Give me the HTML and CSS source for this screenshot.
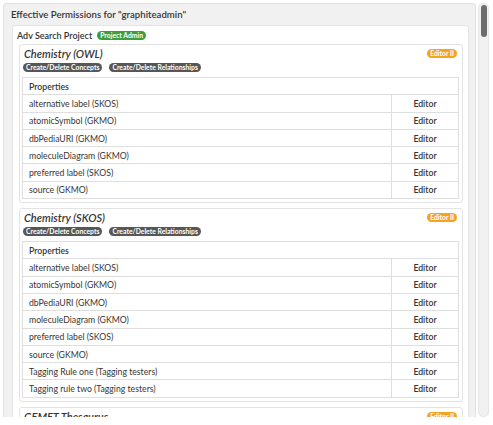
FILE: index.html
```html
<!DOCTYPE html>
<html>
<head>
<meta charset="utf-8">
<link rel="stylesheet" href="styles.css">
</head>
<body>
<div class="frame">
  <div class="viewport">
    <div class="panel">
      <div class="panel-title">Effective Permissions for "graphiteadmin"</div>
      <div class="project">
        <div class="project-title">Adv Search Project <span class="badge badge-green">Project Admin</span></div>
        <div class="cards">
          <div class="card">
            <div class="card-head">
              <span class="card-title">Chemistry (OWL)</span>
              <span class="badge badge-orange">Editor II</span>
            </div>
            <div class="card-badges">
              <span class="badge badge-dark">Create/Delete Concepts</span>
              <span class="badge badge-dark">Create/Delete Relationships</span>
            </div>
            <table class="perm-table">
              <tr><th colspan="2">Properties</th></tr>
              <tr><td>alternative label (SKOS)</td><td class="role">Editor</td></tr>
              <tr><td>atomicSymbol (GKMO)</td><td class="role">Editor</td></tr>
              <tr><td>dbPediaURI (GKMO)</td><td class="role">Editor</td></tr>
              <tr><td>moleculeDiagram (GKMO)</td><td class="role">Editor</td></tr>
              <tr><td>preferred label (SKOS)</td><td class="role">Editor</td></tr>
              <tr><td>source (GKMO)</td><td class="role">Editor</td></tr>
            </table>
          </div>
          <div class="card">
            <div class="card-head">
              <span class="card-title">Chemistry (SKOS)</span>
              <span class="badge badge-orange">Editor II</span>
            </div>
            <div class="card-badges">
              <span class="badge badge-dark">Create/Delete Concepts</span>
              <span class="badge badge-dark">Create/Delete Relationships</span>
            </div>
            <table class="perm-table">
              <tr><th colspan="2">Properties</th></tr>
              <tr><td>alternative label (SKOS)</td><td class="role">Editor</td></tr>
              <tr><td>atomicSymbol (GKMO)</td><td class="role">Editor</td></tr>
              <tr><td>dbPediaURI (GKMO)</td><td class="role">Editor</td></tr>
              <tr><td>moleculeDiagram (GKMO)</td><td class="role">Editor</td></tr>
              <tr><td>preferred label (SKOS)</td><td class="role">Editor</td></tr>
              <tr><td>source (GKMO)</td><td class="role">Editor</td></tr>
              <tr><td>Tagging Rule one (Tagging testers)</td><td class="role">Editor</td></tr>
              <tr><td>Tagging rule two (Tagging testers)</td><td class="role">Editor</td></tr>
            </table>
          </div>
          <div class="card">
            <div class="card-head">
              <span class="card-title">GEMET Thesaurus</span>
              <span class="badge badge-orange">Editor II</span>
            </div>
            <div class="card-badges">
              <span class="badge badge-dark">Create/Delete Concepts</span>
              <span class="badge badge-dark">Create/Delete Relationships</span>
            </div>
            <table class="perm-table">
              <tr><th colspan="2">Properties</th></tr>
              <tr><td>alternative label (SKOS)</td><td class="role">Editor</td></tr>
              <tr><td>preferred label (SKOS)</td><td class="role">Editor</td></tr>
            </table>
          </div>
        </div>
      </div>
    </div>
  </div>
  <div class="scrollbar"><div class="thumb"></div></div>
</div>
</body>
</html>
```
FILE: styles.css
```css
html, body {
  margin: 0;
  padding: 0;
  background: #ffffff;
}
body {
  font-family: Lato, "Open Sans", sans-serif;
  color: #353535;
}
.frame {
  display: flex;
  align-items: flex-start;
  gap: 2px;
  margin: 3px 0 0 3px;
}
.viewport {
  width: 473px;
  height: 414px;
  overflow: hidden;
}
.scrollbar {
  box-sizing: border-box;
  width: 11px;
  height: 414px;
  background: #f1f1f1;
  border: 1px solid #e6e6e6;
  border-radius: 5px;
  padding: 1px 1px 0 1px;
}
.thumb {
  width: 6px;
  height: 32px;
  margin: 0 auto;
  background: #6d6d6d;
  border-radius: 3px;
}
.panel {
  box-sizing: border-box;
  width: 473px;
  background: #f1f1f1;
  border: 1px solid #e1e1e1;
  border-radius: 3px;
  padding: 0 6px 6px 8px;
}
.panel-title {
  height: 21px;
  line-height: 22px;
  margin-left: -1px;
  font-size: 9.6px;
  font-weight: 600;
}
.project {
  background: #ffffff;
  border: 1px solid #e4e4e4;
  border-radius: 3px;
  padding: 0 5px 6px 6px;
}
.project-title {
  height: 18px;
  margin-left: -2px;
  font-size: 9px;
  font-weight: 600;
  display: flex;
  align-items: center;
  gap: 5px;
}
.cards {
  display: flex;
  flex-direction: column;
  gap: 5px;
}
.card {
  border: 1px solid #e3e3e3;
  border-radius: 3px;
  padding: 0 3px 3px 2px;
}
.card-head {
  height: 18px;
  display: flex;
  justify-content: space-between;
  align-items: flex-start;
  padding-left: 2px;
}
.card-title {
  font-style: italic;
  font-weight: 600;
  font-size: 11px;
  line-height: 17px;
}
.card-head .badge {
  margin-top: 4px;
  margin-right: 2px;
}
.card-badges {
  display: flex;
  gap: 7px;
  padding-left: 1px;
  margin-bottom: 5px;
}
.badge {
  display: inline-block;
  height: 9px;
  line-height: 9.5px;
  padding: 0 3px;
  border-radius: 5px;
  font-size: 6.8px;
  font-weight: 700;
  color: #ffffff;
  white-space: nowrap;
}
.badge-green { background: #3e9f3a; }
.badge-orange { background: #f5a41c; }
.badge-dark { background: #575757; }
.perm-table {
  width: 100%;
  border-collapse: collapse;
  border: 1px solid #dedede;
  font-size: 8.7px;
}
.perm-table th,
.perm-table td {
  height: 16.3px;
  padding: 0 0 0 6px;
  border: 1px solid #dedede;
  text-align: left;
}
.perm-table th {
  font-weight: 600;
}
.perm-table td.role {
  width: 66px;
  padding: 0;
  text-align: center;
  font-weight: 600;
}
```
